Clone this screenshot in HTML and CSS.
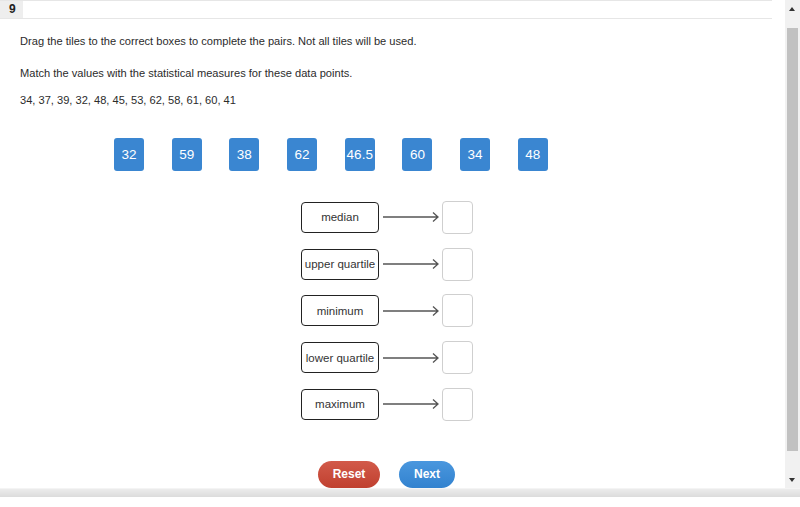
FILE: index.html
```html
<!DOCTYPE html>
<html>
<head>
<meta charset="utf-8">
<link rel="stylesheet" href="styles.css">
</head>
<body>
<div class="page">
  <div class="top">
    <div class="content">
      <div class="header"><div class="qnum">9</div></div>
      <p class="line l1">Drag the tiles to the correct boxes to complete the pairs. Not all tiles will be used.</p>
      <p class="line l2">Match the values with the statistical measures for these data points.</p>
      <p class="line l3">34, 37, 39, 32, 48, 45, 53, 62, 58, 61, 60, 41</p>
      <div class="tiles">
        <div class="tile">32</div>
        <div class="tile">59</div>
        <div class="tile">38</div>
        <div class="tile">62</div>
        <div class="tile">46.5</div>
        <div class="tile">60</div>
        <div class="tile">34</div>
        <div class="tile">48</div>
      </div>
      <div class="pairs">
        <div class="pair"><div class="label">median</div><svg class="arrow" width="56" height="12" viewBox="0 0 56 12"><path d="M0 6H55M50 1.5L55 6L50 10.5" fill="none" stroke="#555" stroke-width="1.3"/></svg><div class="target"></div></div>
        <div class="pair"><div class="label">upper quartile</div><svg class="arrow" width="56" height="12" viewBox="0 0 56 12"><path d="M0 6H55M50 1.5L55 6L50 10.5" fill="none" stroke="#555" stroke-width="1.3"/></svg><div class="target"></div></div>
        <div class="pair"><div class="label">minimum</div><svg class="arrow" width="56" height="12" viewBox="0 0 56 12"><path d="M0 6H55M50 1.5L55 6L50 10.5" fill="none" stroke="#555" stroke-width="1.3"/></svg><div class="target"></div></div>
        <div class="pair"><div class="label">lower quartile</div><svg class="arrow" width="56" height="12" viewBox="0 0 56 12"><path d="M0 6H55M50 1.5L55 6L50 10.5" fill="none" stroke="#555" stroke-width="1.3"/></svg><div class="target"></div></div>
        <div class="pair"><div class="label">maximum</div><svg class="arrow" width="56" height="12" viewBox="0 0 56 12"><path d="M0 6H55M50 1.5L55 6L50 10.5" fill="none" stroke="#555" stroke-width="1.3"/></svg><div class="target"></div></div>
      </div>
      <div class="buttons">
        <button class="btn reset">Reset</button>
        <button class="btn next">Next</button>
      </div>
    </div>
    <div class="vscroll">
      <div class="arrow-up"></div>
      <div class="thumb"></div>
      <div class="arrow-down"></div>
    </div>
  </div>
  <div class="hscroll"></div>
</div>
</body>
</html>
```
FILE: styles.css
```css
html, body {
  margin: 0;
  padding: 0;
  background: #fff;
  overflow: hidden;
}
body {
  font-family: "Liberation Sans", Arial, sans-serif;
  color: #333;
}
.page {
  width: 800px;
  height: 507px;
  display: flex;
  flex-direction: column;
}
.top {
  display: flex;
  height: 488px;
}
.content {
  flex: 1;
  display: flex;
  flex-direction: column;
}
.header {
  height: 19px;
  border-top: 1px solid #e6e6e6;
  border-bottom: 1px solid #e6e6e6;
  box-sizing: border-box;
  margin-right: 13px;
  display: flex;
}
.qnum {
  width: 23px;
  background: #eeeeee;
  font-weight: bold;
  font-size: 12px;
  color: #222;
  padding-left: 9px;
  box-sizing: border-box;
  line-height: 17px;
}
.line {
  margin: 0;
  padding-left: 20px;
  font-size: 11.1px;
  line-height: 14px;
  color: #2b2b2b;
}
.l1 { margin-top: 15px; }
.l2 { margin-top: 18px; }
.l3 { margin-top: 13px; }
.tiles {
  display: flex;
  gap: 27.7px;
  margin-top: 31px;
  padding-left: 114px;
}
.tile {
  width: 30px;
  height: 33px;
  border-radius: 3px;
  background: #3a86d1;
  color: #fff;
  font-size: 13.5px;
  display: flex;
  align-items: center;
  justify-content: center;
}
.pairs {
  display: flex;
  flex-direction: column;
  gap: 16px;
  margin-top: 31px;
  padding-left: 301px;
}
.pair {
  display: flex;
  align-items: center;
  height: 30.75px;
}
.label {
  width: 78px;
  height: 31px;
  box-sizing: border-box;
  border: 1.5px solid #222;
  border-radius: 4px;
  font-size: 11.5px;
  color: #333;
  display: flex;
  align-items: center;
  justify-content: center;
  white-space: nowrap;
}
.arrow {
  margin-left: 4px;
  margin-right: 3px;
}
.target {
  width: 31px;
  height: 33px;
  box-sizing: border-box;
  border: 1px solid #cfcfcf;
  border-radius: 4px;
}
.buttons {
  display: flex;
  gap: 19px;
  margin-top: 41px;
  padding-left: 318px;
}
.btn {
  height: 27px;
  border: none;
  border-radius: 14px;
  color: #fff;
  font-family: "Liberation Sans", Arial, sans-serif;
  font-weight: bold;
  font-size: 12px;
  padding: 0;
}
.reset {
  width: 62px;
  background: linear-gradient(#d25a4a, #c0402f);
}
.next {
  width: 56px;
  background: linear-gradient(#4a97de, #3282cf);
}
.vscroll {
  width: 15px;
  background: #f1f1f1;
  display: flex;
  flex-direction: column;
  align-items: center;
}
.arrow-up {
  height: 28px;
  width: 100%;
  position: relative;
}
.arrow-up::after {
  content: "";
  position: absolute;
  left: 4px;
  top: 7px;
  border-left: 3.5px solid transparent;
  border-right: 3.5px solid transparent;
  border-bottom: 4px solid #333;
}
.thumb {
  width: 11px;
  height: 423px;
  background: #c1c1c1;
}
.arrow-down {
  flex: 1;
  width: 100%;
  position: relative;
}
.arrow-down::after {
  content: "";
  position: absolute;
  left: 4px;
  bottom: 6px;
  border-left: 3.5px solid transparent;
  border-right: 3.5px solid transparent;
  border-top: 4px solid #333;
}
.hscroll {
  height: 8px;
  background: linear-gradient(#ececec, #dcdcdc);
  border-top: 1px solid #f4f4f4;
}
```
